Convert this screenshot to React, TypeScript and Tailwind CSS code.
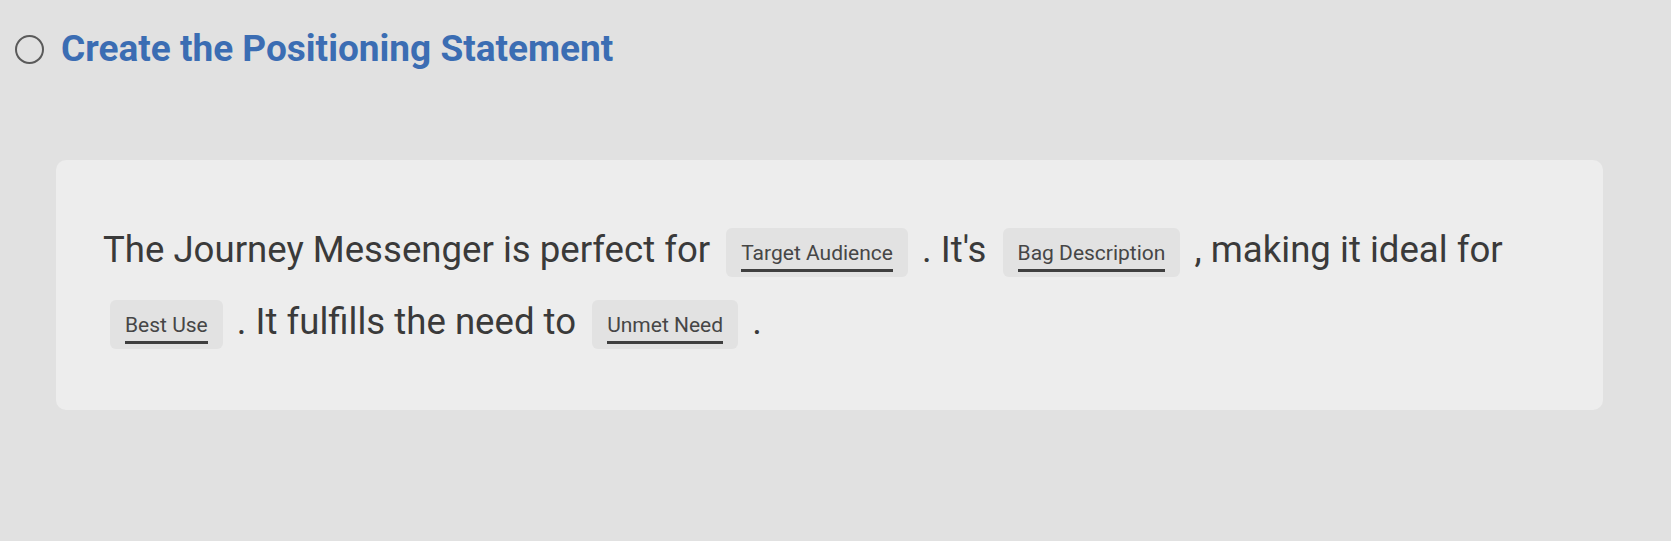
import React from 'react'

function Blank({ label }: { label: string }) {
  return (
    <span className="ml-[7px] mr-[5px] inline-flex h-[49px] items-center rounded-md bg-[#e2e2e2] px-[15px] pt-[8px] align-middle">
      <span className="border-b-[3px] border-[#3f3f3f] pb-[3px] text-[21px] leading-[26px] text-[#464646]">
        {label}
      </span>
    </span>
  )
}

export default function App() {
  return (
    <div
      className="min-h-screen w-full bg-[#e1e1e1] pt-[27px]"
      style={{ fontFamily: 'Roboto, "Noto Sans", sans-serif' }}
    >
      {/* Step header */}
      <div className="flex items-center gap-[17px] pl-[15px]">
        <span className="h-[29px] w-[29px] rounded-full border-2 border-[#5a5a5a]" />
        <h1 className="text-[37px] font-bold leading-[44px] text-[#3b6db3]">
          Create the Positioning Statement
        </h1>
      </div>

      {/* Statement card */}
      <div className="ml-[56px] mr-[68px] mt-[89px] rounded-[10px] bg-[#ededed] px-[47px] pt-[54px] pb-[52px]">
        <p className="text-[36.6px] leading-[72px] text-[#3a3a3a]">
          The Journey Messenger is perfect for <Blank label="Target Audience" /> . It's{' '}
          <Blank label="Bag Description" /> , making it ideal for <Blank label="Best Use" /> . It
          fulfills the need to <Blank label="Unmet Need" /> .
        </p>
      </div>
    </div>
  )
}
